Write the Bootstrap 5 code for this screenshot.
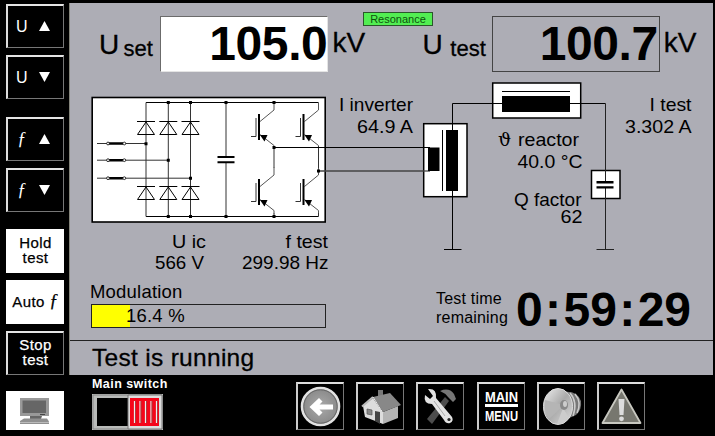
<!DOCTYPE html>
<html lang="en">
<head>
<meta charset="utf-8">
<meta name="viewport" content="width=device-width, initial-scale=1">
<title>Resonance test control</title>
<link href="https://cdn.jsdelivr.net/npm/bootstrap@5.3.0/dist/css/bootstrap.min.css" rel="stylesheet">
<style>
body{background:#000;font-family:"Liberation Sans",Arial,sans-serif;color:#000;width:715px;height:436px;overflow:hidden;line-height:1}
.side{width:69px;padding:4px 6px 0}
.hmi{width:58px;height:44px;border:1px solid #777;border-top:2px solid #e4e4e4;border-left:2px solid #ddd;border-radius:0;background:#000;color:#fff;font-size:15px;line-height:15px;letter-spacing:.4px;padding:0 0 3px;margin-bottom:7px;-webkit-text-stroke:.25px currentColor}
.hmi.key{padding:0 5px 1px 0;gap:11px;font-size:16px;-webkit-text-stroke:0}
.hmi.on{background:#fff;color:#000;border-color:#fff}
.hmi .tri{width:11px;height:10px}
.hmi.gap-low{margin-bottom:18px}
.hmi.gap-mid{margin-bottom:17px}
.fn{font-family:"Liberation Serif",serif;font-style:italic;font-size:18px;width:11px;text-align:center}
.panel{width:644px;height:372px;margin-top:3px;background:#adadb5;border-left:1px solid #85857c}
.readout{height:73px;padding:13px 0 0 29px}
.qty{font-size:28px;line-height:56px;padding-top:1px;-webkit-text-stroke:.3px #000}
.sub{font-size:22px;line-height:46px;padding-top:10px;-webkit-text-stroke:.3px #000;margin:0 7.500px 0 4.300px}
.unit{font-size:28px;line-height:54px;-webkit-text-stroke:.3px #000;margin-left:4px}
.second{margin-left:57.5px}
.second + .sub{margin:0 6px 0 7.500px}
.num{width:168px;height:56px;border:1px solid #444;font-size:48px;font-weight:700;line-height:54px;text-align:right;padding-right:1px;letter-spacing:-.4px;flex:none}
.num.entry{background:#fff;border-color:#6b6b6b #e4e4e4 #e4e4e4 #6b6b6b;padding-right:0}
.reson{width:70px;height:14px;left:293px;top:9px;background:#52ee52;border:1px solid #2b562b;font-size:11px;line-height:12px;color:#0d520d}
.diagram text{font-size:18.5px}
.lower{height:65px;padding-left:21px}
.modl{font-size:18.5px;line-height:18px;letter-spacing:.2px;margin-left:-1px}
.modbar{width:235px;height:24px;border:1px solid #222;border-radius:0;background:transparent;font-size:18.5px;margin-top:3px}
.modfill{background:#ff0}
.modval{left:34px;top:0;line-height:22px;letter-spacing:.2px}
.remain{font-size:16px;line-height:19px;margin-left:110px;width:80px;padding-top:14px;letter-spacing:.2px}
.clock{font-size:48px;font-weight:700;line-height:48px;padding-top:11px}
.clock span{margin:0 2.4px}
.status{height:35px;border-top:1px solid #222;font-size:24.5px;line-height:34px;padding-left:22px;letter-spacing:.3px;-webkit-text-stroke:.3px #000}
.foot{height:61px;padding-left:6px}
.pc{width:58px;height:39px;background:#fff;margin-top:16px}
.msw{margin-left:28px;width:204px;padding-top:1px}
.mswl{font-size:12.5px;font-weight:700;line-height:16px;letter-spacing:.45px;color:#fff}
.tool{width:48px;height:48px;border:1px solid #777;border-top:2px solid #ddd;border-left:2px solid #ccc;border-radius:0;padding:0;background:#000}
.tools{gap:12.2px;padding-top:7px}
</style>
</head>
<body>
<div class="d-flex">
  <nav class="side d-flex flex-column">
    <button class="hmi key d-flex align-items-center justify-content-center"><span>U</span><svg class="tri" viewBox="0 0 10 10" preserveAspectRatio="none"><path d="M5 0L10 10H0z" fill="#fff"/></svg></button>
    <button class="hmi key gap-low d-flex align-items-center justify-content-center"><span>U</span><svg class="tri" viewBox="0 0 10 10" preserveAspectRatio="none"><path d="M5 10L10 0H0z" fill="#fff"/></svg></button>
    <button class="hmi key d-flex align-items-center justify-content-center"><span class="fn">ƒ</span><svg class="tri" viewBox="0 0 10 10" preserveAspectRatio="none"><path d="M5 0L10 10H0z" fill="#fff"/></svg></button>
    <button class="hmi key gap-mid d-flex align-items-center justify-content-center"><span class="fn">ƒ</span><svg class="tri" viewBox="0 0 10 10" preserveAspectRatio="none"><path d="M5 10L10 0H0z" fill="#fff"/></svg></button>
    <button class="hmi on">Hold<br>test</button>
    <button class="hmi on">Auto <span class="fn">ƒ</span></button>
    <button class="hmi mb-0">Stop<br>test</button>
  </nav>
  <main class="panel">
    <section class="readout d-flex position-relative">
      <div class="qty">U</div><div class="sub">set</div><div class="num entry">105.0</div><div class="unit">kV</div>
      <div class="qty second">U</div><div class="sub">test</div><div class="num">100.7</div><div class="unit">kV</div>
      <div class="reson position-absolute text-center">Resonance</div>
    </section>
    <svg class="diagram d-block" width="643" height="199" viewBox="70 76 643 199" fill="none" stroke="#000">
      <defs>
        <g id="diode"><path d="M-9 0H9M0 .5L-8.5 13H8.5z" stroke-width="1"/></g>
        <g id="igbt">
          <path d="M0 0V7.5L-14 19M-14 32L0 43V46" stroke="#555"/>
          <path d="M-15 11.5V37.5" stroke-width="2"/>
          <path d="M-18 15.5V34H-23" stroke="#333"/>
          <path d="M-14 32.5H-6.5L-9.5 39z" fill="#000" stroke="none"/>
        </g>
      </defs>
      <rect x="92.2" y="97.5" width="233" height="124.5" fill="#fff" stroke-width="1.6"/>
      <path d="M146 102.5H318.5M146 216.5H318.5"/>
      <path d="M146 102.5V216.5M168.3 102.5V216.5M190.5 102.5V216.5M97 143.5H146M97 160.2H168M97 178.2H190M226 102.5V156M226 163V216.5" stroke="#333"/>
      <g><use href="#diode" x="146" y="121.5"/><use href="#diode" x="168.3" y="121.5"/><use href="#diode" x="190.5" y="121.5"/>
      <use href="#diode" x="146" y="186.5"/><use href="#diode" x="168.3" y="186.5"/><use href="#diode" x="190.5" y="186.5"/></g>
      <path d="M109 143.5H123M109 160.2H123M109 178.2H123" stroke-width="2.4"/>
      <g fill="#fff" stroke-width=".8"><circle cx="108" cy="143.5" r="1.4"/><circle cx="124.3" cy="143.5" r="1.4"/><circle cx="108" cy="160.2" r="1.4"/><circle cx="124.3" cy="160.2" r="1.4"/><circle cx="108" cy="178.2" r="1.4"/><circle cx="124.3" cy="178.2" r="1.4"/></g>
      <path d="M217.5 157H234.5M217.5 162.2H234.5" stroke-width="2"/>
      <path d="M226 158.1V161.1" stroke="#fff" stroke-width="2"/>
      <use href="#igbt" x="274" y="102.5"/><use href="#igbt" x="318.5" y="102.5"/>
      <use href="#igbt" x="274" y="167.5"/><use href="#igbt" x="318.5" y="167.5"/>
      <path d="M274 146V168M318.5 146V168M274 213V216.5M318.5 213V216.5" stroke="#333"/>
      <path d="M274 147.5H430"/><path d="M318.5 171H430" stroke="#444" stroke-width="1.3"/>
      <path d="M166.8 102.5h3M189 102.5h3M224.5 102.5h3M272.5 102.5h3M144.5 143.7h3M166.8 160.2h3M189 178.2h3M166.8 216.5h3M189 216.5h3M224.5 216.5h3M272.5 216.5h3M272.5 147.5h3M317 171h3" stroke-width="3"/>
      <rect x="423.7" y="123.7" width="43.3" height="73" fill="#fff" stroke-width="1.5"/>
      <path d="M423 147.5H430M452.5 130V103.5H502M452.5 190V249.5M444 249.5H461.5"/><path d="M423 171H430" stroke="#444" stroke-width="1.3"/>
      <path d="M442.5 130V191"/>
      <path d="M428 147.5H439.5V171H428zM446 130H458V191H446z" fill="#000" stroke="none"/>
      <rect x="492.7" y="83" width="88" height="35" fill="#fff" stroke-width="1.5"/>
      <path d="M492 103.5H502M502 91.5H570M570 103.5H605.5"/>
      <path d="M502 96H570V112H502z" fill="#000" stroke="none"/>
      <rect x="591.5" y="170.5" width="28.5" height="28" fill="#fff" stroke-width="1.5"/>
      <path d="M605.5 103.5V181M605.5 188V249.5M596.5 249.5H614" stroke="#222"/>
      <path d="M596.5 182.2H613.5M596.5 187.4H613.5" stroke-width="2.4"/>
      <g fill="#000" stroke="none">
        <text x="339" y="111" textLength="74" lengthAdjust="spacingAndGlyphs">I inverter</text>
        <text x="357" y="133" textLength="56" lengthAdjust="spacingAndGlyphs">64.9 A</text>
        <text x="649.5" y="111" textLength="42" lengthAdjust="spacingAndGlyphs">I test</text>
        <text x="625" y="133" textLength="66.5" lengthAdjust="spacingAndGlyphs">3.302 A</text>
        <text x="498" y="146" font-family="DejaVu Serif, serif">ϑ</text>
        <text x="518" y="146" textLength="61" lengthAdjust="spacingAndGlyphs">reactor</text>
        <text x="517.5" y="167.5" textLength="65" lengthAdjust="spacingAndGlyphs">40.0 °C</text>
        <text x="514" y="205.5" textLength="67.5" lengthAdjust="spacingAndGlyphs">Q factor</text>
        <text x="560.5" y="222.5" textLength="22" lengthAdjust="spacingAndGlyphs">62</text>
        <text x="172" y="248" textLength="34" lengthAdjust="spacingAndGlyphs">U ic</text>
        <text x="155" y="269" textLength="49" lengthAdjust="spacingAndGlyphs">566 V</text>
        <text x="285.5" y="248" textLength="42.5" lengthAdjust="spacingAndGlyphs">f test</text>
        <text x="242" y="269" textLength="86.5" lengthAdjust="spacingAndGlyphs">299.98 Hz</text>
      </g>
    </svg>
    <section class="lower d-flex">
      <div class="pt-2">
        <div class="modl">Modulation</div>
        <div class="modbar progress position-relative"><div class="progress-bar modfill" style="width:16.4%"></div><span class="modval position-absolute">16.4 %</span></div>
      </div>
      <div class="remain">Test time<br>remaining</div>
      <div class="clock">0<span>:</span>59<span>:</span>29</div>
    </section>
    <div class="status">Test is running</div>
  </main>
</div>
<footer class="foot d-flex">
  <div class="pc d-flex justify-content-center"><svg width="34" height="39" viewBox="0 0 34 39"><path d="M2 7H31V25H2z" fill="#999"/><path d="M4.500 9.500H28V22H4.500z" fill="#666"/><path d="M22 23.500h5" stroke="#444"/><path d="M12 25H24L23 28H12z" fill="#666"/><path d="M2 30L6 27.500H29L31 30.500V33H2z" fill="#909090"/><path d="M2 31.500H31" stroke="#bbb"/></svg></div>
  <div class="msw">
    <div class="mswl">Main switch</div>
    <svg class="d-block mt-0" width="71" height="38" viewBox="0 -2 71 38"><path d="M0 0H71V36H0z" fill="#b9bbb9"/><path d="M1 1H70V35H1z" fill="none" stroke="#888"/><path d="M5 4H36V32H5z" fill="#000"/><path d="M36 1H70V35H36z" fill="#ddd" stroke="#777"/><path d="M38 4H67V32H38z" fill="#f5061a"/><path d="M42.500 7V29M48 7V29M53.500 7V29M59 7V29M64.500 7V29" stroke="#eee" stroke-width="1.200"/><path d="M43.500 7V29M49 7V29M54.500 7V29M60 7V29M65.500 7V29" stroke="#944" stroke-width=".8"/></svg>
  </div>
  <div class="tools d-flex">
    <button class="tool" aria-label="Back"><svg class="d-block" width="45" height="45" viewBox="0 0 45 45"><defs><radialGradient id="ball"><stop stop-color="#aaa"/><stop offset="1" stop-color="#888"/></radialGradient></defs><circle cx="22.500" cy="22.500" r="18.500" fill="url(#ball)" stroke="#e2e2e2" stroke-width="2.600"/><circle cx="22.500" cy="22.500" r="16.700" fill="none" stroke="#666"/><path d="M11.500 23L21 14L24.500 17.500L21.500 20.500H35V25.500H21.500L24.500 28.500L21 32z" fill="#fff"/></svg></button>
    <button class="tool" aria-label="Home"><svg class="d-block" width="45" height="45" viewBox="0 0 45 45"><path d="M20 6H25V14H20z" fill="#777"/><path d="M5 22L15 14L25 29V40L7 33z" fill="#ddd"/><path d="M25 28L40 22V34L25 40z" fill="#b5b5b5"/><path d="M15 13L32 9L43 21L25 28z" fill="#888"/><path d="M15 13L4 22.500" stroke="#bbb" stroke-width="2"/><path d="M15 13L25 29" stroke="#eee"/><path d="M17 27L22 28V40L17 37z" fill="#444"/><path d="M9 25L14 26V31L9 30z" fill="#888" stroke="#555" stroke-width=".7"/></svg></button>
    <button class="tool" aria-label="Tools"><svg class="d-block" width="45" height="45" viewBox="0 0 45 45"><path d="M9 35L27 13L31 17L14 40z" fill="#4c4c4c"/><path d="M22 7Q31 3 36 10L38 15L35 18L30 13Q27 9 22 7z" fill="#777"/><path d="M10 5Q19 4 18 14L34 33Q36 37 32 39Q28 40 26 36L14 20Q5 20 7 11L12 15L15 12z" fill="#e2e2e2"/><path d="M16 17L27 32" stroke="#aaa"/><circle cx="31" cy="35.500" r="1.600" fill="#222"/></svg></button>
    <button class="tool" aria-label="Main menu"><svg class="d-block" width="45" height="45" viewBox="0 0 45 45"><g fill="#fff" font-family="Liberation Sans, Arial, sans-serif" font-weight="700" font-size="15.500"><text x="6" y="18" textLength="33" lengthAdjust="spacingAndGlyphs">MAIN</text><text x="6" y="37" textLength="33" lengthAdjust="spacingAndGlyphs">MENU</text></g><path d="M6 21.500H39" stroke="#fff" stroke-width="3.200"/></svg></button>
    <button class="tool" aria-label="Sound"><svg class="d-block" width="45" height="45" viewBox="0 0 45 45"><defs><linearGradient id="cone" x2="1" y2="1"><stop stop-color="#eee"/><stop offset=".5" stop-color="#aaa"/><stop offset="1" stop-color="#ddd"/></linearGradient></defs><path d="M24 8Q38 6 42 17Q43 26 37 31L26 36z" fill="#777"/><path d="M31 9Q39 18 34 32M36 10Q43 18 38 29" fill="none" stroke="#ccc" stroke-width="1.500"/><ellipse cx="19" cy="22.500" rx="14.500" ry="18" fill="url(#cone)" stroke="#ddd"/><path d="M18 40L24 24L30 34Q25 40 18 40z" fill="#ccc"/><path d="M6 16L25 21L10 35Q4 27 6 16z" fill="#b5b5b5"/><ellipse cx="25" cy="21" rx="4" ry="5" fill="#888"/><ellipse cx="26" cy="20" rx="2" ry="3" fill="#ccc"/></svg></button>
    <button class="tool" aria-label="Alarms"><svg class="d-block" width="45" height="45" viewBox="0 0 45 45"><path d="M22.500 5.500L41.500 39H3.500z" fill="#77776f" stroke="#c8c8c0" stroke-width="1.800" stroke-linejoin="round"/><path d="M19.500 15H25.500L24.500 31H20.500z" fill="#ddd"/><circle cx="22.500" cy="34.800" r="2.400" fill="#ddd"/></svg></button>
  </div>
</footer>
<script src="https://cdn.jsdelivr.net/npm/bootstrap@5.3.0/dist/js/bootstrap.bundle.min.js"></script>
</body>
</html>
